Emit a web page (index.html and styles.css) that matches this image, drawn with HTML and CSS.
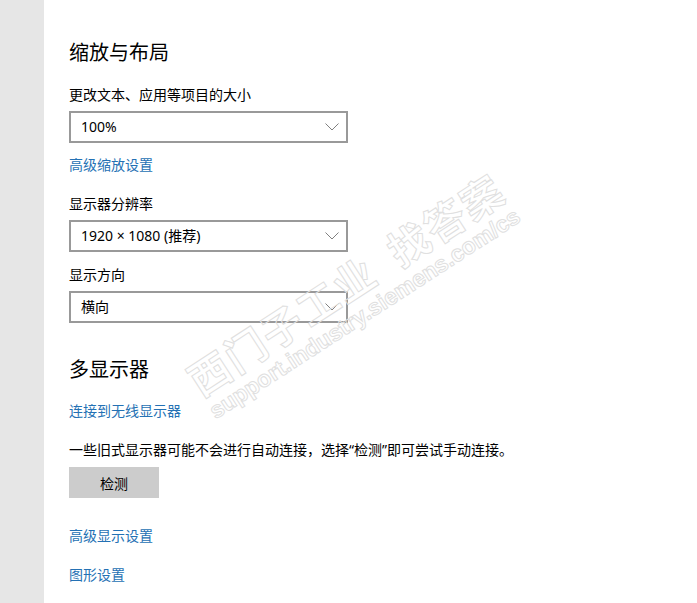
FILE: index.html
```html
<!DOCTYPE html>
<html lang="zh-CN">
<head>
<meta charset="utf-8">
<title>显示设置</title>
<link rel="stylesheet" href="styles.css">
</head>
<body>
<div class="app">
  <aside class="sidebar"></aside>
  <main class="content">
    <h2 class="heading">缩放与布局</h2>
    <div class="label label-first">更改文本、应用等项目的大小</div>
    <div class="select">
      <span class="select-text">100%</span>
      <svg class="chevron" width="14" height="8" viewBox="0 0 14 8"><polyline points="0.5,0.5 7,7 13.5,0.5" fill="none" stroke="#808080" stroke-width="1"/></svg>
    </div>
    <a class="link link-scale" href="#">高级缩放设置</a>
    <div class="label label-res">显示器分辨率</div>
    <div class="select">
      <span class="select-text">1920 × 1080 (推荐)</span>
      <svg class="chevron" width="14" height="8" viewBox="0 0 14 8"><polyline points="0.5,0.5 7,7 13.5,0.5" fill="none" stroke="#808080" stroke-width="1"/></svg>
    </div>
    <div class="label label-orient">显示方向</div>
    <div class="select">
      <span class="select-text">横向</span>
      <svg class="chevron" width="14" height="8" viewBox="0 0 14 8"><polyline points="0.5,0.5 7,7 13.5,0.5" fill="none" stroke="#808080" stroke-width="1"/></svg>
    </div>
    <h2 class="heading heading-multi">多显示器</h2>
    <a class="link link-wireless" href="#">连接到无线显示器</a>
    <p class="note">一些旧式显示器可能不会进行自动连接，选择“检测”即可尝试手动连接。</p>
    <button class="button" type="button">检测</button>
    <a class="link link-adv" href="#">高级显示设置</a>
    <a class="link link-gfx" href="#">图形设置</a>
  </main>
</div>
<div class="watermark" aria-hidden="true">
  <div class="wm-cn">西门子工业&nbsp;&nbsp;找答案</div>
  <div class="wm-url">support.industry.siemens.com/cs</div>
</div>
</body>
</html>
```

FILE: styles.css
```css
html, body {
  margin: 0;
  padding: 0;
  background: #ffffff;
}

body {
  font-family: "Noto Sans", "Noto Sans CJK SC", sans-serif;
  color: #000000;
  width: 697px;
  height: 603px;
  overflow: hidden;
  position: relative;
}

.app {
  display: flex;
  height: 603px;
}

.sidebar {
  width: 44px;
  flex: 0 0 44px;
  background: #e6e6e6;
}

.content {
  flex: 1;
  padding: 38px 0 0 25px;
  display: flex;
  flex-direction: column;
  align-items: flex-start;
}

.heading {
  margin: 0;
  font-family: "Noto Sans CJK SC", sans-serif;
  font-weight: 400;
  font-size: 20px;
  line-height: 28px;
  height: 28px;
  color: #000;
}

.heading-multi {
  margin-top: 32px;
}

.label {
  font-family: "Noto Sans CJK SC", sans-serif;
  font-size: 14px;
  line-height: 20px;
  height: 20px;
  margin-bottom: 7px;
}

.label-first { margin-top: 18px; }
.label-res { margin-top: 19px; }
.label-orient { margin-top: 12px; }

.select {
  box-sizing: border-box;
  width: 279px;
  height: 32px;
  border: 2px solid #999999;
  display: flex;
  align-items: center;
  justify-content: space-between;
  padding: 0 7px 0 10px;
}

.select-text {
  font-family: "Noto Sans", "Noto Sans CJK SC", sans-serif;
  font-size: 14px;
  line-height: 20px;
}

.chevron {
  display: block;
}

.link {
  font-family: "Noto Sans CJK SC", sans-serif;
  font-size: 14px;
  line-height: 20px;
  height: 20px;
  color: #2471b4;
  text-decoration: none;
}

.link-scale { margin-top: 11px; }
.link-wireless { margin-top: 17px; }
.link-adv { margin-top: 27px; }
.link-gfx { margin-top: 19px; }

.note {
  margin: 20px 0 0 0;
  font-family: "Noto Sans", "Noto Sans CJK SC", sans-serif;
  font-size: 14px;
  line-height: 20px;
  height: 20px;
  white-space: nowrap;
}

.button {
  margin-top: 7px;
  width: 90px;
  height: 31px;
  border: none;
  background: #cccccc;
  font-family: "Noto Sans CJK SC", sans-serif;
  font-size: 14px;
  color: #000;
  padding: 0;
}

.watermark {
  position: absolute;
  left: 152px;
  top: 258px;
  width: 400px;
  text-align: center;
  transform: rotate(-33deg);
  transform-origin: 50% 50%;
  pointer-events: none;
}

.wm-cn {
  font-family: "Noto Sans CJK SC", sans-serif;
  font-weight: 700;
  font-size: 41px;
  line-height: 46px;
  color: transparent;
  -webkit-text-stroke: 1px #e0e0e0;
  letter-spacing: 2px;
}

.wm-url {
  font-family: "Liberation Sans", sans-serif;
  font-weight: 700;
  font-size: 23px;
  line-height: 26px;
  color: transparent;
  -webkit-text-stroke: 1px #e0e0e0;
}
```
